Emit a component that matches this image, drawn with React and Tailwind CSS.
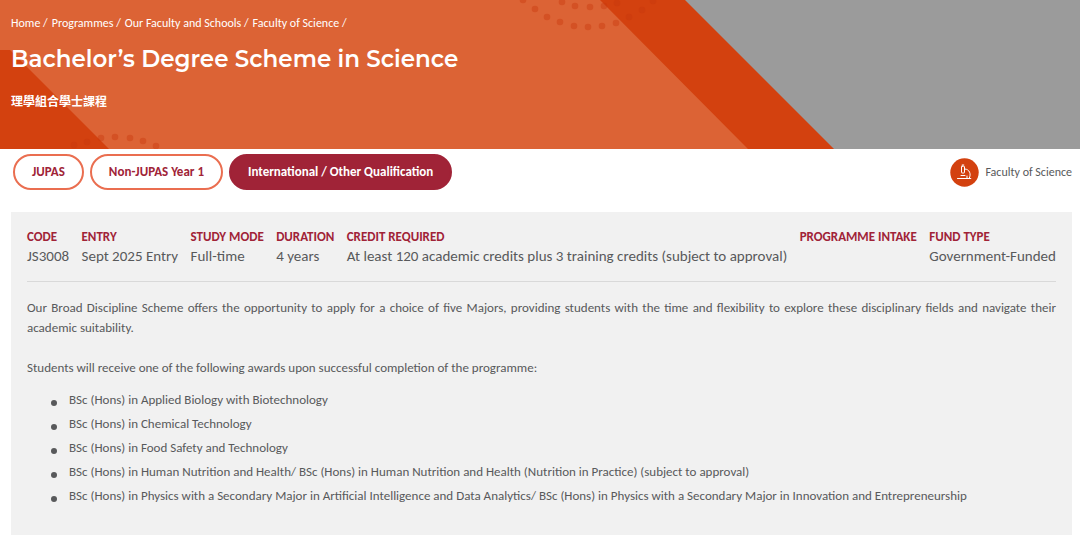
const crumbs = ["Home", "Programmes", "Our Faculty and Schools", "Faculty of Science"];

const tabs = [
  { label: "JUPAS" },
  { label: "Non-JUPAS Year 1" },
  { label: "International / Other Qualification", active: true },
];

const facts = [
  { label: "CODE", value: "JS3008" },
  { label: "ENTRY", value: "Sept 2025 Entry" },
  { label: "STUDY MODE", value: "Full-time" },
  { label: "DURATION", value: "4 years" },
  { label: "CREDIT REQUIRED", value: "At least 120 academic credits plus 3 training credits (subject to approval)" },
  { label: "PROGRAMME INTAKE", value: "" },
  { label: "FUND TYPE", value: "Government-Funded" },
];

const awards = [
  "BSc (Hons) in Applied Biology with Biotechnology",
  "BSc (Hons) in Chemical Technology",
  "BSc (Hons) in Food Safety and Technology",
  "BSc (Hons) in Human Nutrition and Health/ BSc (Hons) in Human Nutrition and Health (Nutrition in Practice) (subject to approval)",
  "BSc (Hons) in Physics with a Secondary Major in Artificial Intelligence and Data Analytics/ BSc (Hons) in Physics with a Secondary Major in Innovation and Entrepreneurship",
];

const dots = [
  [523, 0], [535, 9], [547, 17], [560, 22], [574, 26], [588, 27], [602, 26], [616, 23], [629, 17], [642, 10], [653, 1],
  [562, 2], [575, 6], [590, 7], [604, 6], [617, 3],
  [74, 145], [87, 142], [101, 138], [115, 137], [130, 138], [143, 141], [156, 146],
];

const BannerArt = () => (
  <svg className="absolute left-0 top-0" width="834" height="149" viewBox="0 0 834 149" aria-hidden="true">
    <path d="M0 0H685L834 149H0Z" fill="#d3410f" />
    <path d="M0 0H600L748 149H109L10 50H0Z" fill="#dc6335" />
    {dots.map(([x, y]) => (
      <circle key={`${x}-${y}`} cx={x} cy={y} r="3.3" fill="#c8370c" opacity="0.4" />
    ))}
  </svg>
);

const MicroscopeIcon = () => (
  <svg width="29" height="29" viewBox="0 0 29 29" fill="none" aria-hidden="true">
    <circle cx="14.5" cy="14.5" r="14.2" fill="#d3410f" />
    <g stroke="#fff" strokeLinecap="round" strokeLinejoin="round">
      <path d="M7.5 20.5H20.8M11 17.5H15" />
      <rect x="11.5" y="8.2" width="3" height="6.8" rx="0.6" />
      <path d="M12.2 7H13.8M15 11C19.5 11.2 21.5 16 19.2 20.3M17 18V20.3" />
    </g>
  </svg>
);

export default function App() {
  return (
    <div className="bg-white font-['Carlito','Lato',sans-serif] text-[#58595b]">
      <header className="relative overflow-hidden bg-[#9b9b9b] px-[11px] pt-[15px] pb-[38px] text-white">
        <BannerArt />
        <div className="relative">
          <nav aria-label="Breadcrumb" className="flex gap-1 text-xs leading-4">
            {crumbs.map((c) => (
              <span key={c}>
                <a href="#">{c}</a> /
              </span>
            ))}
          </nav>
          <h1 className="mt-3 font-['Montserrat','Inter',sans-serif] text-[23px] leading-8 font-semibold">
            Bachelor’s Degree Scheme in Science
          </h1>
          <p lang="zh-Hant" className="mt-4 font-['Noto_Sans_CJK_TC',sans-serif] text-xs leading-5 font-bold">
            理學組合學士課程
          </p>
        </div>
      </header>

      <div className="flex items-center justify-between px-2 pt-[5px] pl-[13px]">
        <div className="flex gap-1.5">
          {tabs.map((t) => (
            <button
              key={t.label}
              type="button"
              className={
                t.active
                  ? "h-9 rounded-full border-2 border-[#a02337] bg-[#a02337] px-[17px] text-[13px] font-bold text-white"
                  : "h-9 rounded-full border-2 border-[#ea6e50] bg-white px-[17px] text-[13px] font-bold text-[#a02337]"
              }
            >
              {t.label}
            </button>
          ))}
        </div>
        <a href="#" className="flex items-center gap-[6px] text-xs">
          <MicroscopeIcon />
          Faculty of Science
        </a>
      </div>

      <main className="mr-2 mb-[6px] ml-[11px] mt-[22px] bg-[#f1f1f1] px-4 pt-[17px] pb-[29px] text-[13px] leading-5">
        <dl className="flex justify-between border-b border-[#d9d9d9] pb-[14px]">
          {facts.map((f) => (
            <div key={f.label} className="whitespace-nowrap">
              <dt className="text-[13px] leading-4 font-bold text-[#a02337]">{f.label}</dt>
              <dd className="text-[15px] leading-[22px]">{f.value}</dd>
            </div>
          ))}
        </dl>
        <p className="mt-4 text-justify">
          Our Broad Discipline Scheme offers the opportunity to apply for a choice of five Majors, providing students
          with the time and flexibility to explore these disciplinary fields and navigate their academic suitability.
        </p>
        <p className="mt-5">Students will receive one of the following awards upon successful completion of the programme:</p>
        <ul className="mt-3 flex flex-col gap-1 pl-6">
          {awards.map((a) => (
            <li key={a} className="flex gap-3">
              <span className="mt-[10px] size-[6px] shrink-0 rounded-full bg-[#58595b]" />
              {a}
            </li>
          ))}
        </ul>
      </main>
    </div>
  );
}
